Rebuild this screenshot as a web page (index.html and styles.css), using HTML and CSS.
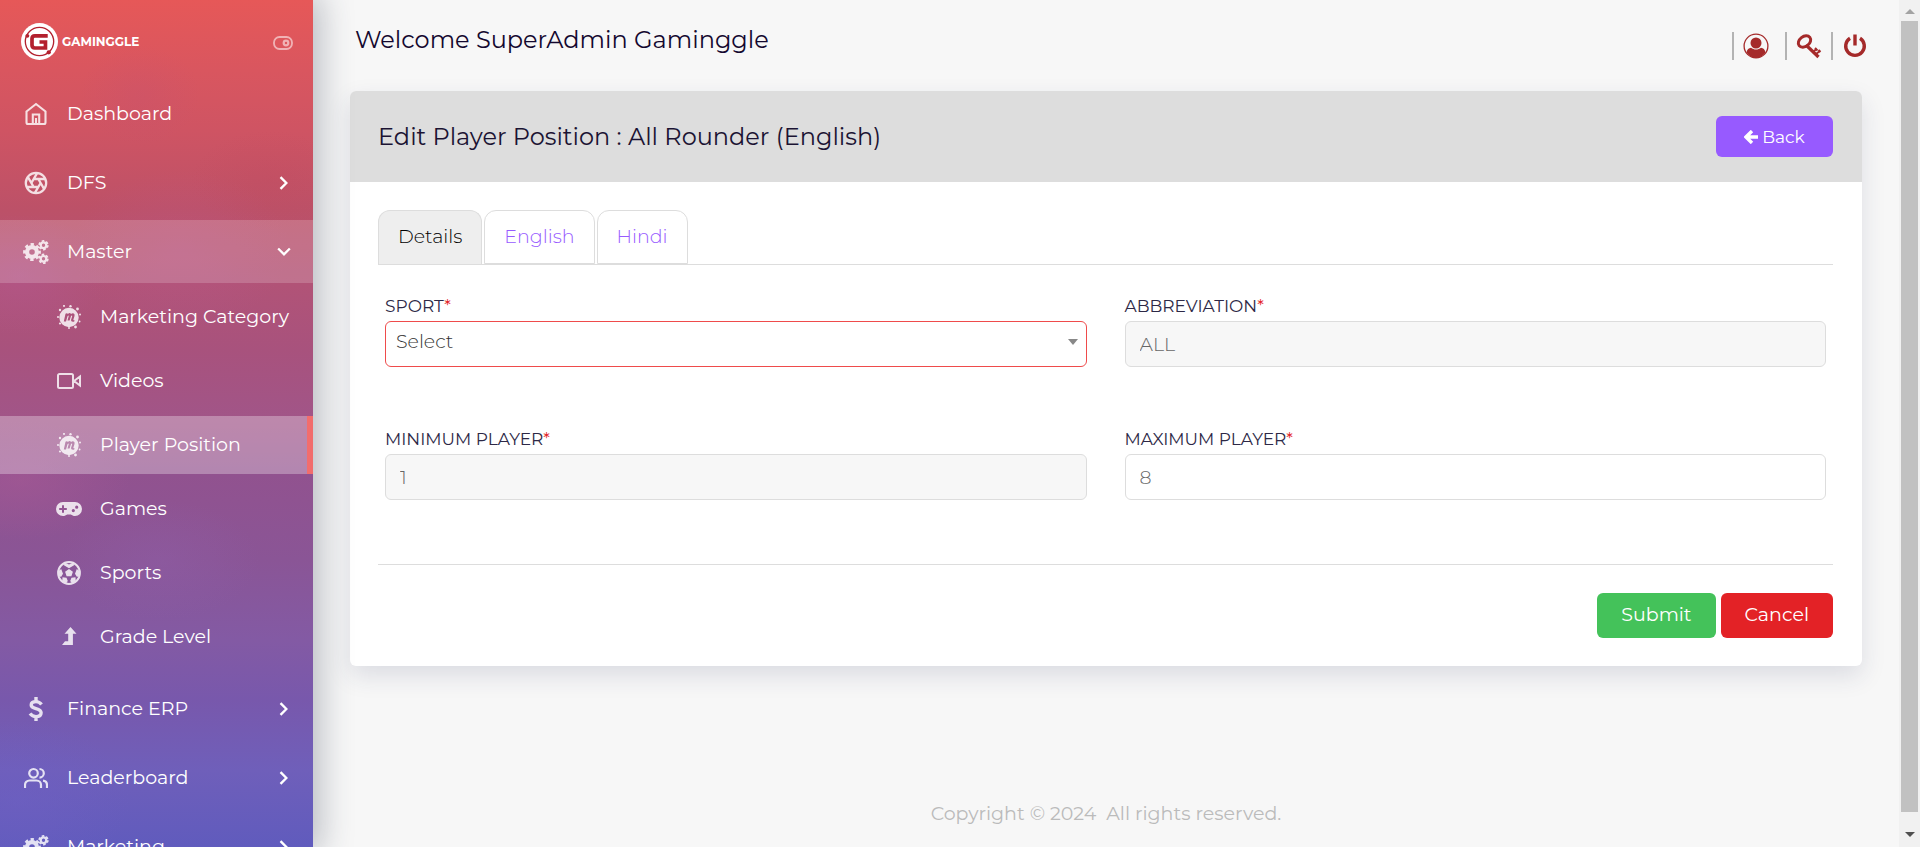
FILE: index.html
```html
<!DOCTYPE html>
<html lang="en">
<head>
<meta charset="utf-8">
<meta name="viewport" content="width=device-width, initial-scale=1">
<title>Edit Player Position</title>
<link rel="stylesheet" href="styles.css">
</head>
<body>
<svg class="sprite" aria-hidden="true">
  <symbol id="i-cogs" viewBox="0 0 26 24">
    <g fill="none" stroke="currentColor">
      <circle cx="9" cy="12" r="4.900" stroke-width="4.200"/>
      <circle cx="9" cy="12" r="7.500" stroke-width="2.800" stroke-dasharray="3.300 2.590" stroke-dashoffset="1.650"/>
      <circle cx="20.500" cy="5.200" r="2.800" stroke-width="2.200"/>
      <circle cx="20.500" cy="5.200" r="4.300" stroke-width="1.800" stroke-dasharray="2.500 2"/>
      <circle cx="20.500" cy="18.800" r="2.800" stroke-width="2.200"/>
      <circle cx="20.500" cy="18.800" r="4.300" stroke-width="1.800" stroke-dasharray="2.500 2"/>
    </g>
  </symbol>
  <symbol id="i-meetup" viewBox="0 0 24 24">
    <g fill="currentColor">
      <path fill-rule="evenodd" d="M12 2.800a9.700 9.700 0 1 0 .01 19.400A9.700 9.700 0 0 0 12 2.800zM6.800 16.400h2.200l1.500-5.200c.7-1 1.300-.9 1.200 0l-1.200 4.400h2.100l1.400-4.500c.6-.9 1.400-.8 1.200.1l-1.100 3.600c-.3 1.700 1.200 2.400 3.200 1.700l.1-1.400c-.9.2-1.200 0-1-.7l1.100-3.500c.6-2.300-1.500-3.400-3.500-1.900-.7-1.200-2-1.200-3 0-.5-.9-1.900-1-2.500-.2z"/>
      <circle cx="7" cy=".9" r="1"/><circle cx="13.500" cy="1.300" r="1.200"/><circle cx="3" cy="5" r="1.200"/>
      <circle cx="20.500" cy="4" r="1.400"/><circle cx="23" cy="9.500" r="1"/><circle cx="1" cy="12" r="1"/>
      <circle cx="3" cy="18.500" r="1.100"/><circle cx="12" cy="23" r="1"/><circle cx="18.500" cy="22" r="1.400"/><circle cx="22.600" cy="16.500" r=".9"/>
    </g>
  </symbol>
  <symbol id="i-chevron" viewBox="0 0 12 12">
    <path d="M3 1l5 5-5 5" fill="none" stroke="currentColor" stroke-width="2"/>
  </symbol>
</svg>

<aside class="sidebar">
  <div class="brand">
    <a class="logo" href="#">
      <svg class="logo-mark" viewBox="0 0 36 36" aria-hidden="true">
        <circle cx="18" cy="18" r="18" fill="#fff"/>
        <circle cx="18" cy="18" r="13.800" fill="none" stroke="#b3202e" stroke-width="1.300"/>
        <circle cx="6.200" cy="12.500" r="1.900" fill="#b3202e"/>
        <circle cx="27" cy="28.500" r="2.100" fill="#b3202e"/>
        <path d="M26 12.500H13.500c-2 0-2.800.8-2.800 2.800v6.200c0 2 .8 2.800 2.800 2.800h10.300V18.500H18" fill="none" stroke="#b3202e" stroke-width="3.600"/>
      </svg>
      <span class="logo-name">GAMINGGLE</span>
    </a>
    <button class="menu-toggle" type="button" aria-label="Toggle menu">
      <svg width="20" height="14" viewBox="0 0 20 14"><g fill="none" stroke="currentColor" stroke-width="1.800"><rect x="1" y="1" width="18" height="12" rx="5.500"/><circle cx="13" cy="7" r="2.300" stroke-width="2.200"/></g></svg>
    </button>
  </div>

  <nav class="menu">
    <a class="item" href="#">
      <svg class="icon" viewBox="0 0 24 24"><path d="M2.500 9.500L12 2l9.500 7.500V20.500a1.500 1.500 0 0 1-1.500 1.500H4A1.500 1.500 0 0 1 2.500 20.500zM8.800 22v-9.500h6.400V22M12 22v-6" fill="none" stroke="currentColor" stroke-width="2.100"/></svg>
      <span>Dashboard</span>
    </a>
    <a class="item" href="#">
      <svg class="icon" viewBox="0 0 24 24"><g fill="none" stroke="currentColor" stroke-width="2.300"><circle cx="12" cy="12" r="10.200"/><path d="M14.310 8l5.740 9.940M9.690 8h11.480M7.380 12l5.740-9.940M9.690 16L3.950 6.060M14.310 16H2.830M16.620 12l-5.740 9.940"/></g></svg>
      <span>DFS</span>
      <svg class="chevron"><use href="#i-chevron"/></svg>
    </a>
    <a class="item open" href="#">
      <svg class="icon wide"><use href="#i-cogs"/></svg>
      <span>Master</span>
      <svg class="chevron down"><use href="#i-chevron"/></svg>
    </a>
    <div class="submenu">
      <a class="item sub" href="#"><svg class="icon"><use href="#i-meetup"/></svg><span>Marketing Category</span></a>
      <a class="item sub" href="#"><svg class="icon" viewBox="0 0 24 24"><path d="M2.500 5h12a1.500 1.500 0 0 1 1.500 1.500v11a1.500 1.500 0 0 1-1.500 1.500h-12A1.500 1.500 0 0 1 1 17.500v-11A1.500 1.500 0 0 1 2.500 5zM17 12l6-4.500v9z" fill="none" stroke="currentColor" stroke-width="2"/></svg><span>Videos</span></a>
      <a class="item sub current" href="#"><svg class="icon"><use href="#i-meetup"/></svg><span>Player Position</span></a>
      <a class="item sub" href="#"><svg class="icon wide" viewBox="0 0 26 24"><path fill="currentColor" fill-rule="evenodd" d="M7 5h12a7 7 0 0 1 0 14c-1.600 0-3-.6-4.200-1.500h-3.600C10 18.400 8.600 19 7 19A7 7 0 0 1 7 5zM6 8.200V11H3.200v2H6v2.800h2V13h2.800v-2H8V8.200zM17.300 12a1.600 1.600 0 1 0 .01 3.200 1.600 1.600 0 0 0-.01-3.200zM20.700 8.600a1.600 1.600 0 1 0 .01 3.200 1.600 1.600 0 0 0-.01-3.200z"/></svg><span>Games</span></a>
      <a class="item sub" href="#"><svg class="icon" viewBox="0 0 24 24"><circle cx="12" cy="12" r="10.900" fill="none" stroke="currentColor" stroke-width="2"/><path fill="currentColor" d="M12 8l3.900 2.800-1.500 4.500H9.600l-1.500-4.500zM7.500 1.500L12 3.500l4.500-2 .6 2.800L12 7.300 6.900 4.300zM1 10.500l3.200-2.500 1.800 4.700-1.800 3.100-2.700-.4zM23 10.500L19.800 8 18 12.700l1.800 3.100 2.700-.4zM5.200 20.500l.3-4.300 4 .6 1.300 3.200-2.100 2.800zM18.800 20.500l-.3-4.300-4 .6-1.300 3.200 2.100 2.800z"/></svg><span>Sports</span></a>
      <a class="item sub" href="#"><svg class="icon" viewBox="0 0 24 24"><path fill="currentColor" d="M13.500 2l6 6.800h-3.600V20H5l3-3.800h3.200V8.800H7.500z"/></svg><span>Grade Level</span></a>
    </div>
    <a class="item" href="#">
      <svg class="icon" viewBox="0 0 24 24"><path fill="none" stroke="currentColor" stroke-width="3.400" d="M12 0v4M12 20v4M17.500 7.500C16 5.500 14 4.600 12 4.600c-3 0-4.800 1.200-4.800 3.400 0 4.800 9.900 2.400 9.900 7.800 0 2.500-2.200 3.800-5.100 3.800-2.400 0-4.500-1-6-3"/></svg>
      <span>Finance ERP</span>
      <svg class="chevron"><use href="#i-chevron"/></svg>
    </a>
    <a class="item" href="#">
      <svg class="icon" viewBox="0 0 24 24"><path fill="none" stroke="currentColor" stroke-width="2.200" d="M1 22v-3a4.500 4.500 0 0 1 4.500-4.500h7A4.500 4.500 0 0 1 17 19v3M9.500 3a4.300 4.300 0 1 0 .01 8.600A4.300 4.300 0 0 0 9.500 3zM15.500 3a4.300 4.300 0 0 1 0 8.600M19 14.600a4.500 4.500 0 0 1 4 4.400v3"/></svg>
      <span>Leaderboard</span>
      <svg class="chevron"><use href="#i-chevron"/></svg>
    </a>
    <a class="item" href="#">
      <svg class="icon wide"><use href="#i-cogs"/></svg>
      <span>Marketing</span>
      <svg class="chevron"><use href="#i-chevron"/></svg>
    </a>
  </nav>
</aside>

<div class="page">
  <header class="topbar">
    <h1 class="welcome">Welcome SuperAdmin Gaminggle</h1>
    <div class="tools">
      <a class="tool" href="#" aria-label="Profile"><svg viewBox="0 0 26 26"><circle cx="13" cy="13" r="11.900" fill="none" stroke="currentColor" stroke-width="1.300"/><circle cx="13" cy="10" r="5.500" fill="currentColor"/><path fill="currentColor" d="M3.500 19.500c.6-3 2.200-4.500 4.500-4.700 3 2.400 7 2.400 10 0 2.300.2 3.900 1.700 4.500 4.700C20 23 17 25 13 25s-7-2-9.500-5.500z"/></svg></a>
      <a class="tool" href="#" aria-label="Change password"><svg viewBox="0 0 26 26"><g fill="none" stroke="currentColor"><ellipse cx="8.500" cy="8.500" rx="6.800" ry="5" transform="rotate(-38 8.500 8.500)" stroke-width="3"/><path d="M10 12l12.500 12" stroke-width="3.200"/><path d="M17 19l4-3.500M20 21l4.500-3.500M19 15l2.500 2.500M22.500 17l2 2" stroke-width="1.900"/></g></svg></a>
      <a class="tool" href="#" aria-label="Log out"><svg viewBox="0 0 26 26"><path d="M8 5.200a9.300 9.300 0 1 0 10 0M13 1.500v11" fill="none" stroke="currentColor" stroke-width="3.400"/></svg></a>
    </div>
  </header>

  <main class="card">
    <div class="card-head">
      <h2 class="card-title">Edit Player Position : All Rounder (English)</h2>
      <a class="btn back" href="#"><svg width="14" height="14" viewBox="0 0 14 14" aria-hidden="true"><path d="M8 1L2 7l6 6M2 7h12" fill="none" stroke="currentColor" stroke-width="3.400"/></svg>Back</a>
    </div>
    <form class="card-body">
      <div class="tabs">
        <a class="tab active" href="#">Details</a>
        <a class="tab" href="#">English</a>
        <a class="tab" href="#">Hindi</a>
      </div>
      <div class="fields">
        <div class="field">
          <label for="sport">SPORT<span class="req">*</span></label>
          <div class="select-wrap">
            <select id="sport" class="control invalid"><option>Select</option></select>
          </div>
        </div>
        <div class="field">
          <label for="abbr">ABBREVIATION<span class="req">*</span></label>
          <input id="abbr" class="control" type="text" value="ALL" readonly>
        </div>
        <div class="field">
          <label for="min">MINIMUM PLAYER<span class="req">*</span></label>
          <input id="min" class="control" type="text" value="1" readonly>
        </div>
        <div class="field">
          <label for="max">MAXIMUM PLAYER<span class="req">*</span></label>
          <input id="max" class="control" type="text" value="8">
        </div>
      </div>
      <div class="actions">
        <button class="btn submit" type="submit">Submit</button>
        <button class="btn cancel" type="button">Cancel</button>
      </div>
    </form>
  </main>

  <footer class="footer">Copyright © 2024 &nbsp;All rights reserved.</footer>
</div>

<div class="scrollbar" aria-hidden="true">
  <svg class="arrow up" width="10" height="5" viewBox="0 0 10 5"><path d="M5 0l5 5H0z"/></svg>
  <div class="thumb"></div>
  <svg class="arrow" width="10" height="5" viewBox="0 0 10 5"><path d="M0 0h10L5 5z"/></svg>
</div>
</body>
</html>
```

FILE: styles.css
```css
* { box-sizing: border-box; }

body {
  margin: 0;
  display: flex;
  height: 100vh;
  overflow: hidden;
  background: #f7f7f7;
  color: #1b1333;
  font-family: Montserrat, Inter, "Open Sans", sans-serif;
  font-size: 18px;
}

a { color: inherit; text-decoration: none; }
h1, h2 { margin: 0; font-weight: 400; }
button, input, select { font: inherit; }
.sprite { display: none; }

/* Sidebar */
.sidebar {
  flex: 0 0 313px;
  overflow: hidden;
  z-index: 1;
  color: #fff;
  background:
    radial-gradient(ellipse 60px 50px at 140px 95px, rgba(190, 80, 120, .2), transparent),
    radial-gradient(ellipse 110px 80px at 180px 250px, rgba(190, 90, 150, .25), transparent),
    radial-gradient(ellipse 90px 60px at 20px 275px, rgba(180, 90, 160, .35), transparent),
    radial-gradient(ellipse 80px 50px at 270px 180px, rgba(190, 70, 90, .2), transparent),
    radial-gradient(ellipse 110px 60px at 20px 480px, rgba(170, 90, 150, .5), transparent),
    radial-gradient(ellipse 100px 60px at 160px 560px, rgba(145, 98, 175, .3), transparent),
    radial-gradient(ellipse 110px 80px at 20px 800px, rgba(110, 95, 195, .5), transparent),
    linear-gradient(#e65858 0, #d9565f 70px, #cf5463 130px, #bc5168 210px, #b15377 285px, #a8527d 350px, #a15588 420px, #91528f 475px, #8a5596 560px, #835aa4 640px, #7858ac 700px, #6f5fba 770px, #605bbd 847px);
  box-shadow: 0 0 32px 6px rgba(40, 50, 70, .32);
}

.brand {
  display: flex;
  align-items: center;
  justify-content: space-between;
  height: 82px;
  padding: 0 20px 0 21px;
}

.logo { display: flex; align-items: center; gap: 4px; }
.logo-mark { width: 37px; height: 37px; }
.logo-name { font-size: 12px; font-weight: 700; }

.menu-toggle {
  display: flex;
  padding: 3px 0 0;
  border: 0;
  background: none;
  color: rgba(255, 255, 255, .55);
}

.item {
  display: flex;
  align-items: center;
  height: 63px;
  margin-bottom: 6px;
  padding: 0 22px 0 24px;
  font-size: 19px;
}
.item span { flex: 1; white-space: nowrap; }
.item.open { margin-bottom: 5px; background: rgba(255, 255, 255, .18); }

.icon {
  width: 24px;
  height: 24px;
  margin-right: 19px;
  opacity: .82;
}
.icon.wide { width: 26px; margin-left: -1px; margin-right: 18px; }

.chevron { width: 14px; height: 14px; }
.chevron.down { transform: rotate(90deg); }

.submenu { margin-bottom: 11px; }
.item.sub { height: 58px; padding: 0 0 1px 57px; }
.item.sub:last-child { margin-bottom: 0; }
.item.current {
  background: rgba(255, 255, 255, .3);
  border-right: 6px solid #f26d6d;
}

/* Page */
.page {
  flex: 1;
  display: flex;
  flex-direction: column;
  min-width: 0;
  padding: 0 37px;
}

.topbar {
  display: flex;
  justify-content: space-between;
  height: 91px;
  padding: 26px 0 0 5px;
}
.welcome { font-size: 24px; line-height: 28px; color: #14082f; }

.tools { display: flex; height: 28px; margin: 6px -6px 0 0; color: #a52a2a; }
.tool {
  display: flex;
  align-items: center;
  padding: 0 9px;
  border-left: 2px solid #b3b3b3;
}
.tool:first-child { padding-right: 16px; }
.tool:last-child { padding-right: 0; }
.tool svg { width: 26px; height: 26px; }

.card {
  border-radius: 6px;
  background: #fff;
  box-shadow: 0 10px 24px rgba(40, 50, 90, .13);
}

.card-head {
  display: flex;
  align-items: center;
  justify-content: space-between;
  height: 91px;
  padding: 0 29px 0 28px;
  border-radius: 6px 6px 0 0;
  background: #ddd;
}
.card-title { font-size: 24px; }

.btn {
  display: flex;
  align-items: center;
  justify-content: center;
  border: 0;
  border-radius: 6px;
  color: #fff;
}
.back { width: 117px; height: 41px; gap: 4px; background: #975aff; font-size: 17px; }

.card-body { padding: 28px 29px 28px 28px; }

.tabs {
  display: flex;
  gap: 2px;
  border-bottom: 1px solid #ddd;
}
.tab {
  height: 54px;
  padding: 0 19px;
  border: 1px solid #ddd;
  border-radius: 12px 12px 0 0;
  color: #975aff;
  font-size: 19px;
  font-weight: 300;
  line-height: 52px;
}
.tab.active { border-bottom: 0; background: #eee; color: #000; }

.fields {
  display: grid;
  grid-template-columns: 1fr 1fr;
  gap: 60px 38px;
  padding: 29px 7px 64px;
  border-bottom: 1px solid #ddd;
}
.field { display: flex; flex-direction: column; }
.field label { height: 27px; font-size: 17px; line-height: 24px; color: #2d2846; }
.req { color: #e32226; }

.control {
  width: 100%;
  height: 46px;
  padding: 0 14px;
  border: 1px solid #ddd;
  border-radius: 6px;
  outline: 0;
  background: #fff;
  color: #666;
  font-size: 19px;
  font-weight: 300;
}
.control[readonly] { background: #f7f7f7; }

.select-wrap { position: relative; }
.select-wrap::after {
  content: "";
  position: absolute;
  top: 18px;
  right: 9px;
  border: 5px solid transparent;
  border-top: 6px solid #888;
  border-bottom: 0;
}
select.control {
  appearance: none;
  display: block;
  padding: 0 10px 6px;
  color: #333;
}
.control.invalid { border-color: #ef4b4b; }

.actions {
  display: flex;
  justify-content: flex-end;
  gap: 5px;
  padding-top: 28px;
}
.actions .btn { height: 45px; padding: 0 24px 2px; font-size: 19px; }
.submit { background: #44c25a; }
.cancel { background: #e32226; }

.footer {
  margin-top: auto;
  padding-bottom: 20px;
  text-align: center;
  color: #bbb;
  font-size: 19px;
  line-height: 26px;
}

/* Scrollbar strip */
.scrollbar {
  flex: 0 0 21px;
  display: flex;
  flex-direction: column;
  align-items: center;
  padding: 9px 2px 10px;
  background: #f1f1f1;
}
.thumb { flex: 1; align-self: stretch; margin: 7px 0 20px; background: #c1c1c1; }
.arrow { fill: #505050; }
.arrow.up { fill: #a3a3a3; }
```
